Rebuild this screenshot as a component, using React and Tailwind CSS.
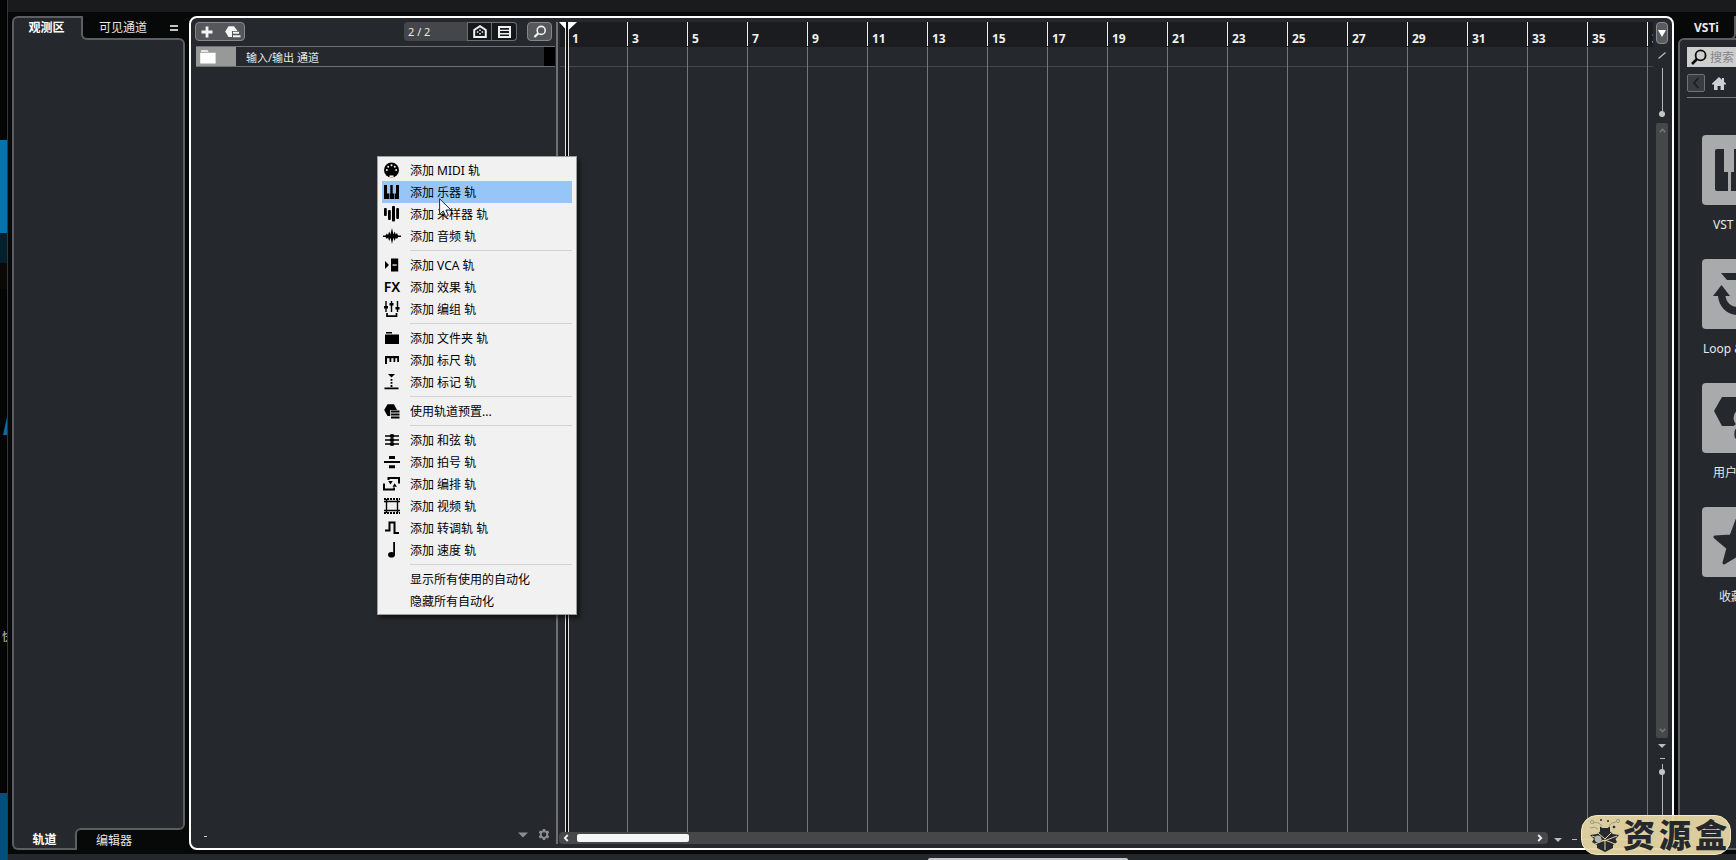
import React from "react";

const SLIDER_Y =
  "block w-3 shrink-0 appearance-none bg-[linear-gradient(#b4b6b7,#b4b6b7)] bg-[length:1px_100%] bg-center bg-no-repeat [writing-mode:vertical-lr] [&::-webkit-slider-thumb]:h-1.5 [&::-webkit-slider-thumb]:w-1.5 [&::-webkit-slider-thumb]:appearance-none [&::-webkit-slider-thumb]:rounded-full [&::-webkit-slider-thumb]:bg-[#c3c5c6]";

const menuIcons = {
  midi: (
    <>
      <circle cx="7.5" cy="8" r="7.5" />
      <g fill="#f1f1f1">
        <circle cx="2.8" cy="8" r="1" />
        <circle cx="4.2" cy="4.7" r="1" />
        <circle cx="7.5" cy="3.3" r="1" />
        <circle cx="10.8" cy="4.7" r="1" />
        <circle cx="12.2" cy="8" r="1" />
        <rect x="5.5" y="13.4" width="4" height="2" />
      </g>
    </>
  ),
  piano: <path d="M0 1h3v8.500h2V15H0zM6.300 1h2.400v8.500H10V15H5.600V9.500h.7zM12 1h3v14h-4.400V9.500H12z" />,
  sampler: (
    <g>
      <rect x="0" y="2" width="2.8" height="8" rx="1" />
      <rect x="4" y="4" width="2.8" height="10" rx="1" />
      <rect x="8" y="0" width="3" height="15.500" rx="1" />
      <rect x="12.2" y="2" width="2.8" height="11" rx="1" />
    </g>
  ),
  audio: (
    <path d="M-1 7.500H1.500L2.800 5.500 4 7 5.200 3.500 6.400 6.500 8 0 9.400 6.500 10.600 3.500 11.800 6.500 13 5 14 7.500H17V9H14L13 11 11.800 9.800 10.600 13 9.400 9.800 8 16 6.600 9.800 5.200 13 4 9.500 2.800 11 1.500 9H-1z" />
  ),
  vca: (
    <>
      <path d="M1 4l4 4-4 4zM7 1.600h7.200v12.800H7z" />
      <path d="M8.500 7.400h4.200v1.300H8.500z" fill="#f1f1f1" />
    </>
  ),
  group: (
    <g>
      <path d="M1.3 0h1.4v11H1.3zM6.8 0h1.4v11H6.8zM12.8 0h1.4v11h-1.4z" />
      <path d="M0 5h4v2.6H0zM5.5 2h4v2.6h-4zM11.5 6h4v2.6h-4z" />
      <path d="M3 12v3.200h9.5V12" fill="none" stroke="currentColor" strokeWidth="1.7" />
    </g>
  ),
  folder: <path d="M2 2h6v1.6H2zM1 4.400h14V14H1z" />,
  ruler: <path d="M1 4h14v6h-1.800V6.200h-1.900V10H9.500V6.200H7.300V10H5.500V6.200H3V12H1z" />,
  marker: <path d="M4 0h7L7.500 3.600zM6.600 5h1.800v1.800H6.600zM6.600 8h1.800v1.800H6.600zM6.600 11h1.800v2H6.600zM.500 13.400h14V15.200H.500z" />,
  preset: (
    <>
      <path d="M3.500 1.200h6.500L13 7H6.200v6H3.500L.2 7z" />
      <path d="M7 7.400h8.500v2H7zM7 10.400h8.500v2H7zM7 13.400h8.500v2H7z" />
    </>
  ),
  chord: (
    <g>
      <path d="M1 3.300h14v1.400H1zM1 7.300h14v1.400H1zM1 11.300h14v1.400H1z" />
      <ellipse cx="8" cy="4" rx="2.400" ry="1.900" />
      <ellipse cx="8" cy="8" rx="2.400" ry="1.900" />
      <ellipse cx="8" cy="12" rx="2.400" ry="1.900" />
    </g>
  ),
  signature: <path d="M5 2h6v3H5zM0 7h16v2H0zM5 11.200h6v3H5z" />,
  arrange: (
    <g>
      <path d="M4.500 4V2H15v5.500M0 7.500V13.500h10v-2" fill="none" stroke="currentColor" strokeWidth="2" />
      <path d="M4.300 5h4.400L6.500 8.600zM8.500 10.800h4.400l-2.200-3.600z" />
    </g>
  ),
  video: (
    <g>
      <path d="M2.500 1v14M13.500 1v14M0 3.500h16M0 12.500h16" fill="none" stroke="currentColor" strokeWidth="1.400" />
      <path d="M0 1h16M0 15h16" fill="none" stroke="currentColor" strokeWidth="1.800" strokeDasharray="2 1" />
    </g>
  ),
  transpose: <path d="M1 10.500h4.500V2.500h5V13H15" fill="none" stroke="currentColor" strokeWidth="2" />,
  tempo: (
    <g>
      <ellipse cx="7.500" cy="12.800" rx="3.500" ry="2.800" />
      <path d="M9.200 0h1.800v12.800H9.200z" />
    </g>
  ),
};

const menuGroups = [
  [
    ["midi", "添加 MIDI 轨"],
    ["piano", "添加 乐器 轨"],
    ["sampler", "添加 采样器 轨"],
    ["audio", "添加 音频 轨"],
  ],
  [
    ["vca", "添加 VCA 轨"],
    ["fx", "添加 效果 轨"],
    ["group", "添加 编组 轨"],
  ],
  [
    ["folder", "添加 文件夹 轨"],
    ["ruler", "添加 标尺 轨"],
    ["marker", "添加 标记 轨"],
  ],
  [["preset", "使用轨道预置..."]],
  [
    ["chord", "添加 和弦 轨"],
    ["signature", "添加 拍号 轨"],
    ["arrange", "添加 编排 轨"],
    ["video", "添加 视频 轨"],
    ["transpose", "添加 转调轨 轨"],
    ["tempo", "添加 速度 轨"],
  ],
  [
    [null, "显示所有使用的自动化"],
    [null, "隐藏所有自动化"],
  ],
];

function MenuIcon({ name }) {
  if (name === "fx") {
    return (
      <span className="flex w-4 justify-center text-sm leading-none font-semibold">FX</span>
    );
  }
  return (
    <svg viewBox="0 0 16 16" className="size-4 overflow-visible" fill="currentColor" aria-hidden="true">
      {name && menuIcons[name]}
    </svg>
  );
}

function ContextMenu() {
  return (
    <div
      role="menu"
      className="absolute top-[156px] left-[377px] z-30 w-[200px] border border-[#9b9d9f] bg-[#f1f1f1] py-0.5 text-black shadow-[3px_3px_4px_rgba(0,0,0,0.55)]"
    >
      {menuGroups.map((group, g) => (
        <React.Fragment key={g}>
          {g > 0 && (
            <div className="h-[7px] pt-[3px] pr-1 pl-8">
              <div className="h-px bg-[#d2d2d2]" />
            </div>
          )}
          {group.map(([icon, label]) => (
            <button
              key={label}
              type="button"
              role="menuitem"
              className={
                "mx-1 flex h-[22px] w-[190px] items-center gap-2.5 pl-0.5 text-left text-xs whitespace-nowrap " +
                (icon === "piano" ? "bg-[#96c6f8]" : "")
              }
            >
              <MenuIcon name={icon} />
              <span className="pt-0.5">{label}</span>
            </button>
          ))}
        </React.Fragment>
      ))}
    </div>
  );
}

function DesktopEdge() {
  return (
    <div className="flex w-2 shrink-0 flex-col overflow-hidden border-r border-[#35383a] bg-[#050505] text-[11px] text-[#c8c8c8]">
      <div className="h-[140px]" />
      <div className="h-[93px] bg-[#0573b0]" />
      <div className="h-[30px] bg-[#04202f]" />
      <div className="h-[26px] bg-[#0b0a09]" />
      <div className="h-[128px]" />
      <svg viewBox="0 0 7 18" className="h-[18px] w-[7px]" fill="#0a6ba3">
        <path d="M7 0v18H3z" />
      </svg>
      <div className="flex-1 pt-[194px] pl-0.5 leading-4 whitespace-nowrap">快</div>
      <div className="h-[67px] bg-[#00507d]" />
    </div>
  );
}

function LeftZone() {
  return (
    <aside className="flex w-[173px] shrink-0 flex-col text-xs text-[#e6e6e6]">
      <div className="z-10 flex h-6">
        <button
          type="button"
          className="w-[75px] rounded-tl-md border-t-2 border-l-2 border-[#5d5e61] bg-[#25282c] pr-2 pb-0.5 font-bold text-white"
        >
          观测区
        </button>
        <div className="z-10 mr-2 -ml-1.5 flex flex-1 items-center justify-between rounded-bl-md border-b-2 border-l-2 border-[#5d5e61] bg-[#070808] pt-0.5 pl-4">
          <button type="button">可见通道</button>
          <button type="button" aria-label="菜单" className="-mr-px flex w-2 flex-col gap-0.5">
            <span className="h-0.5 bg-[#c4c4c4]" />
            <span className="h-0.5 bg-[#c4c4c4]" />
          </button>
        </div>
      </div>
      <div className="-my-0.5 flex-1 rounded-r-md border-2 border-[#5d5e61] bg-[#25282c]" />
      <div className="z-10 flex h-[22px]">
        <button
          type="button"
          className="w-[69px] rounded-bl-md border-b-2 border-l-2 border-[#5d5e61] bg-[#25282c] pt-1 pr-1.5 font-bold text-white"
        >
          轨道
        </button>
        <div className="z-10 mr-2 -ml-1.5 flex flex-1 items-center rounded-tl-md border-t-2 border-l-2 border-[#5d5e61] bg-[#070808] pt-0.5 pl-[19px]">
          <button type="button">编辑器</button>
        </div>
      </div>
    </aside>
  );
}

function TrackList() {
  return (
    <section className="flex w-[365px] shrink-0 flex-col pr-px pl-1 text-xs text-[#e8e8e8]">
      <div className="flex h-[19px] pr-[3px]">
        <div className="flex w-[50px] items-center justify-between rounded-sm border border-[#85878a] bg-[#55575a] pr-[3px] pl-[5px]">
          <button type="button" aria-label="添加轨道">
            <svg viewBox="0 0 12 12" className="size-3" fill="#f4f4f4">
              <path d="M4.6.5h2.8v4.1h4.1v2.8H7.4v4.1H4.6V7.4H.5V4.6h4.1z" />
            </svg>
          </button>
          <button type="button" aria-label="使用轨道预置">
            <svg viewBox="0 0 16 12" className="h-3 w-4" fill="#f4f4f4">
              <path d="M3.500.3H9L12.500 5H7v6H3.500L.2 5.600z" />
              <path d="M8 5.800h6v2H8zM8 9.200h7.500v2H8z" />
            </svg>
          </button>
        </div>
        <div className="ml-auto flex w-[113px] rounded-sm bg-[#454649]">
          <span className="flex-1 pl-1 text-[11px] leading-[19px]">2 / 2</span>
          <button
            type="button"
            aria-label="输入输出"
            className="flex w-[25px] items-center justify-center border border-[#6b6d70] bg-[#17181a]"
          >
            <svg viewBox="0 0 14 13" className="h-[13px] w-3.5" fill="none" stroke="#f0f0f0">
              <path d="M1.2 12V5L7 1.200 12.800 5v7z" strokeWidth="2" />
              <path d="M7 4.500v1.600M7 8v1.600M3.800 7h1.600M8.600 7h1.600" strokeWidth="1.400" />
            </svg>
          </button>
          <button
            type="button"
            aria-label="列表"
            className="flex w-[25px] items-center justify-center rounded-r-sm border border-l-0 border-[#6b6d70] bg-[#17181a]"
          >
            <svg viewBox="0 0 13 12" className="h-3 w-[13px]" fill="none" stroke="#f0f0f0">
              <path d="M1 1h11v10H1z" strokeWidth="2" />
              <path d="M1 4.400h11M1 7.700h11" strokeWidth="1.400" />
            </svg>
          </button>
        </div>
        <button
          type="button"
          aria-label="查找轨道"
          className="ml-2.5 flex w-[25px] items-center justify-center rounded-sm border border-[#85878a] bg-[#55575a]"
        >
          <svg viewBox="0 0 14 13" className="h-[13px] w-3.5" fill="none" stroke="#f0f0f0">
            <circle cx="8.200" cy="5.400" r="4" strokeWidth="1.600" />
            <path d="M5.200 8.400L1.400 12" strokeWidth="2.200" />
          </svg>
        </button>
      </div>

      <div className="mt-[5px] ml-px flex h-[21px] border-y border-[#6f7275]">
        <div className="flex w-10 items-center bg-[#979999] pl-1">
          <svg viewBox="0 0 16 14" className="h-3.5 w-4" fill="#ffffff">
            <path d="M1 .2h6.500l1 1.600H1zM.2 2.800h15.400v10.600H.2z" />
          </svg>
        </div>
        <span className="flex-1 pt-px pl-2.5 text-[11px] leading-[19px]">输入/输出 通道</span>
        <div className="w-[11px] bg-black" />
      </div>

      <div className="mt-auto flex h-[18px] items-center pr-[5px] pl-[9px] text-[#8b8d90]">
        <span className="mt-0.5 h-px w-[3px] bg-[#d0d0d0]" />
        <svg viewBox="0 0 10 6" className="mr-2.5 ml-auto h-1.5 w-2.5" fill="currentColor">
          <path d="M0 .5h10L5 5.500z" />
        </svg>
        <button type="button" aria-label="设置">
          <svg viewBox="0 0 12 12" className="size-3" fill="currentColor">
            <path
              fillRule="evenodd"
              d="M4.900 0h2.200l.4 1.600 1 .5 1.600-.5 1.100 1.900-1.100 1.200v1.600l1.100 1.200-1.100 1.900-1.600-.5-1 .5-.4 1.600H4.900l-.4-1.600-1-.5-1.600.5L.8 7.500l1.100-1.200V4.700L.8 3.500l1.100-1.900 1.600.5 1-.5zM6 3.300a2.300 2.300 0 1 0 0 4.600 2.300 2.300 0 0 0 0-4.600z"
            />
          </svg>
        </button>
      </div>
    </section>
  );
}

function Timeline() {
  const bars = Array.from({ length: 19 }, (_, i) => i * 2 + 1);
  return (
    <section className="flex min-w-0 flex-1 flex-col">
      <div className="relative flex min-h-0 flex-1 overflow-hidden pl-2">
        <div className="absolute inset-x-0 top-0 ml-px h-[25px] bg-[#1a1c1f]" />
        <div className="absolute inset-x-0 top-11 ml-px h-px bg-[#46494b]" />
        {bars.map((bar) => (
          <div key={bar} className="relative flex w-[60px] shrink-0 flex-col text-xs font-bold text-[#f0f0f0]">
            <div
              className={
                "h-6 border-l pt-[9px] pl-1 leading-4 " + (bar === 1 ? "border-transparent" : "border-[#f0f0f0]")
              }
            >
              {bar}
            </div>
            <div
              className={"mt-px flex-1 border-l " + (bar === 1 ? "border-transparent" : "border-[#74777a]")}
            />
          </div>
        ))}
        <div className="absolute inset-y-0 left-1.5 w-1 border-x border-[#e4e4e4] bg-[#0c0d0e]" />
        <svg viewBox="0 0 18 8" className="absolute top-0 left-0 h-2 w-[18px]" fill="#ffffff">
          <path d="M0 0h7v7.500zM9.500 0H18l-8.500 8z" />
        </svg>
      </div>
      <div className="flex h-3 items-center">
        <div className="flex h-3 flex-1 items-center rounded-sm bg-[#464748] pr-[5px] pl-1">
          <svg viewBox="0 0 6 8" className="h-2 w-1.5" fill="none" stroke="#f0f0f0" strokeWidth="1.800">
            <path d="M4.800 1L1.800 4l3 3" />
          </svg>
          <div className="ml-2 h-2 w-28 rounded-xs bg-[#f5f6f6]" />
          <svg viewBox="0 0 6 8" className="ml-auto h-2 w-1.5" fill="none" stroke="#f0f0f0" strokeWidth="1.800">
            <path d="M1.200 1l3 3-3 3" />
          </svg>
        </div>
        <div className="flex w-[105px] items-center pt-[3px] pl-1.5">
          <svg viewBox="0 0 8 4" className="h-1 w-2" fill="#b9bbbc">
            <path d="M0 0h8L4 4z" />
          </svg>
          <span className="ml-2.5 h-px w-[5px] bg-[#b9bbbc]" />
          <input
            type="range"
            aria-label="水平缩放"
            defaultValue="30"
            className="ml-1 h-2 w-[54px] appearance-none bg-[linear-gradient(#b4b6b7,#b4b6b7)] bg-[length:100%_1px] bg-center bg-no-repeat [&::-webkit-slider-thumb]:h-1.5 [&::-webkit-slider-thumb]:w-1.5 [&::-webkit-slider-thumb]:appearance-none [&::-webkit-slider-thumb]:rounded-full [&::-webkit-slider-thumb]:bg-[#c3c5c6]"
          />
          <svg viewBox="0 0 7 7" className="ml-1 size-[7px]" stroke="#b9bbbc">
            <path d="M3.500 0v7M0 3.500h7" />
          </svg>
        </div>
      </div>
    </section>
  );
}

function VerticalControls() {
  return (
    <div className="mr-1 ml-[3px] flex w-3 shrink-0 flex-col items-center">
      <button
        type="button"
        aria-label="标尺类型"
        className="flex h-[22px] w-3 items-center justify-center rounded-sm border border-[#8b8d90] bg-[#595b5e]"
      >
        <svg viewBox="0 0 8 7" className="h-[7px] w-2 shrink-0" fill="#ffffff">
          <path d="M0 0h8L4 7z" />
        </svg>
      </button>
      <svg viewBox="0 0 8 7" className="mt-2 h-[7px] w-2 shrink-0" stroke="#b9bbbc" strokeWidth="1.200">
        <path d="M.5 6.500l7-6" />
      </svg>
      <input type="range" aria-label="波形缩放" defaultValue="100" className={SLIDER_Y + " mt-[9px] h-[49px]"} />
      <div className="mt-1.5 flex w-3 flex-1 flex-col items-center justify-between rounded-xs bg-[#464748] py-[5px]">
        <svg viewBox="0 0 7 5" className="h-[5px] w-[7px]" fill="none" stroke="#77797b" strokeWidth="1.400">
          <path d="M.7 4.300l2.800-3 2.800 3" />
        </svg>
        <svg viewBox="0 0 7 5" className="h-[5px] w-[7px]" fill="none" stroke="#77797b" strokeWidth="1.400">
          <path d="M.7.7l2.800 3 2.800-3" />
        </svg>
      </div>
      <svg viewBox="0 0 8 4" className="mt-1.5 h-1 w-2 shrink-0" fill="#b9bbbc">
        <path d="M0 0h8L4 4z" />
      </svg>
      <span className="mt-2.5 mb-[5px] h-px w-[5px] shrink-0 bg-[#b9bbbc]" />
      <input type="range" aria-label="垂直缩放" defaultValue="7" className={SLIDER_Y + " h-20"} />
    </div>
  );
}

const mediaTiles = [
  {
    label: "VST",
    pad: "pl-[11px]",
    icon: (
      <path d="M15 14h7v23h4v19H15a2 2 0 0 1-2-2V16a2 2 0 0 1 2-2zM32 14h6v23h4v19H29V37h3zM47 14h8a2 2 0 0 1 2 2v38a2 2 0 0 1-2 2H44V37h3z" />
    ),
  },
  {
    label: "Loop &",
    pad: "pl-px",
    icon: (
      <>
        <path d="M19 14h26l8 8v8h-7v-6l-3-3H25z" />
        <path d="M19.500 26l8.500 11h-4.500c1 7 6 11 12.500 11v8C25 56 17 48 16 37h-5z" />
      </>
    ),
  },
  {
    label: "用户",
    pad: "pl-[11px]",
    icon: (
      <>
        <path d="M20 14h28l9 14-9 15H20l-8-15z" />
        <g stroke="#a8aaab" strokeWidth="3">
          <path d="M31 53q-1-10 7-12h6q8 2 7 12v4H33q-2-1-2-4z" />
          <circle cx="41" cy="35" r="8" />
        </g>
      </>
    ),
  },
  {
    label: "收藏",
    pad: "pl-[17px]",
    icon: (
      <path
        d="M35 13l6 16 16 1-12 11 4 15-14-8-13 8 4-15-13-11 16-1z"
        stroke="#25282c"
        strokeWidth="3"
        strokeLinejoin="round"
      />
    ),
  },
];

function RightZone() {
  return (
    <aside className="flex w-[58px] shrink-0 flex-col overflow-hidden text-xs text-[#e8e8e8]">
      <div className="z-10 flex h-6">
        <div className="ml-2 flex w-[50px] items-center rounded-br-md border-r-2 border-b-2 border-[#5d5e61] bg-[#070808] pt-0.5 pl-2">
          <button type="button" className="font-bold text-[#ececec]">
            VSTi
          </button>
        </div>
      </div>
      <div className="-mt-0.5 w-[120px] flex-1 overflow-hidden rounded-l-md border-2 border-[#5d5e61] bg-[#25282c] pt-[7px] pl-[7px]">
        <label className="flex h-5 items-center bg-[#cfcfcf] pl-1">
          <svg viewBox="0 0 16 16" className="size-4 shrink-0" fill="none" stroke="#0a0a0a">
            <circle cx="9.600" cy="6.400" r="5" strokeWidth="1.800" />
            <path d="M6 10l-5 5" strokeWidth="2.600" />
          </svg>
          <input
            type="text"
            aria-label="搜索"
            placeholder="搜索"
            className="ml-[3px] w-20 bg-transparent pt-px text-xs text-black placeholder:text-[#858585]"
          />
        </label>
        <div className="mt-[7px] flex items-center gap-[7px]">
          <button
            type="button"
            aria-label="后退"
            className="flex size-[18px] items-center justify-center rounded-xs border border-[#707375] bg-[#3a3d40]"
          >
            <svg viewBox="0 0 8 12" className="h-3 w-2" fill="none" stroke="#1d1f22" strokeWidth="1.800">
              <path d="M6.500 1L2 6l4.500 5" />
            </svg>
          </button>
          <button type="button" aria-label="主页">
            <svg viewBox="0 0 14 13" className="h-[13px] w-3.5" fill="#cfd0d1">
              <path d="M7 0l3 2.800V1h2v3.700L14 6.600v1h-2V13H8.600V9H5.600v4H2V7.600H0v-1z" />
            </svg>
          </button>
        </div>
        <div className="mt-[5px] h-px bg-[#77797b]" />
        <div className="mt-[37px] ml-[15px] flex flex-col gap-[26px]">
          {mediaTiles.map((tile) => (
            <button key={tile.label} type="button" className="flex h-[98px] flex-col items-start justify-between">
              <svg viewBox="0 0 70 70" className="size-[70px] shrink-0 rounded bg-[#a8aaab]" fill="#25282c">
                {tile.icon}
              </svg>
              <span className={"leading-4 whitespace-nowrap " + tile.pad}>{tile.label}</span>
            </button>
          ))}
        </div>
      </div>
    </aside>
  );
}

function Badge() {
  return (
    <div className="absolute right-[5px] bottom-[5px] z-30 flex h-10 w-[150px] items-center rounded-2xl border border-[#f4e9bf] bg-[#e6d6a4]/95 pl-[7px] text-[#25282c]">
      <svg viewBox="0 0 32 34" className="h-[34px] w-8 shrink-0" fill="#25282c">
        <path d="M11 8.500l2.500 1.500h5L21 8.500v5l3 2.500 6 1-3.500 4 1.500 3-4 3v3l-8 4-8-4v-3l-5-3 2-3-4-4 7-1 3-2.500z" />
        <path d="M3 18l12 5 13-5M9 15l7 6 6-6M6 26l10-4v10M26 26l-10-4" fill="none" stroke="#e6d6a4" strokeWidth="1" />
        <circle cx="9" cy="21" r="3.400" fill="#b3b5b3" />
        <g fill="none" stroke="#9a9b8c" strokeWidth="1">
          <path d="M1 10q5-2 8 1M13 8Q9 3 4 5M20 8q2-4 7-4" />
          <circle cx="3" cy="4" r="1.600" />
          <circle cx="29" cy="3" r="1.600" />
        </g>
        <circle cx="12" cy="2" r="1" />
        <circle cx="19" cy="3" r="1" />
        <circle cx="25" cy="9" r="1.300" />
      </svg>
      <div className="ml-0.5 flex gap-1 text-[32px] leading-9 font-black">
        <span>资</span>
        <span>源</span>
        <span>盒</span>
      </div>
    </div>
  );
}

export default function App() {
  return (
    <div className="relative flex h-screen min-h-[600px] overflow-hidden bg-[#070808] font-['Noto_Sans','Noto_Sans_CJK_SC',sans-serif]">
      <DesktopEdge />
      <div className="flex min-w-0 flex-1 flex-col">
        <div className="h-3 shrink-0 bg-[#1a1b1c]" />
        <div className="flex min-h-0 flex-1 gap-1 py-1 pl-1">
          <LeftZone />
          <main className="flex min-w-0 flex-1 rounded-lg border-2 border-white bg-[#25282c] py-1">
            <TrackList />
            <div className="mr-px w-0.5 shrink-0 bg-[#6d6f71]" />
            <Timeline />
            <VerticalControls />
          </main>
          <RightZone />
        </div>
        <div className="flex h-1.5 shrink-0 items-end justify-center bg-[#24272b]">
          <div className="mr-[-312px] h-0.5 w-[200px] rounded-t-sm bg-[#c9c9c9]" />
        </div>
      </div>

      <ContextMenu />
      <svg viewBox="0 0 13 20" className="absolute top-[198px] left-[439px] z-40 h-5 w-[13px]" aria-hidden="true">
        <path
          d="M.6.8v15.600l3.700-3.500 2.400 5.700 2.600-1.100-2.400-5.500h5.100z"
          fill="#f6faff"
          stroke="#1c2c44"
          strokeWidth="1"
        />
      </svg>
      <Badge />
    </div>
  );
}
